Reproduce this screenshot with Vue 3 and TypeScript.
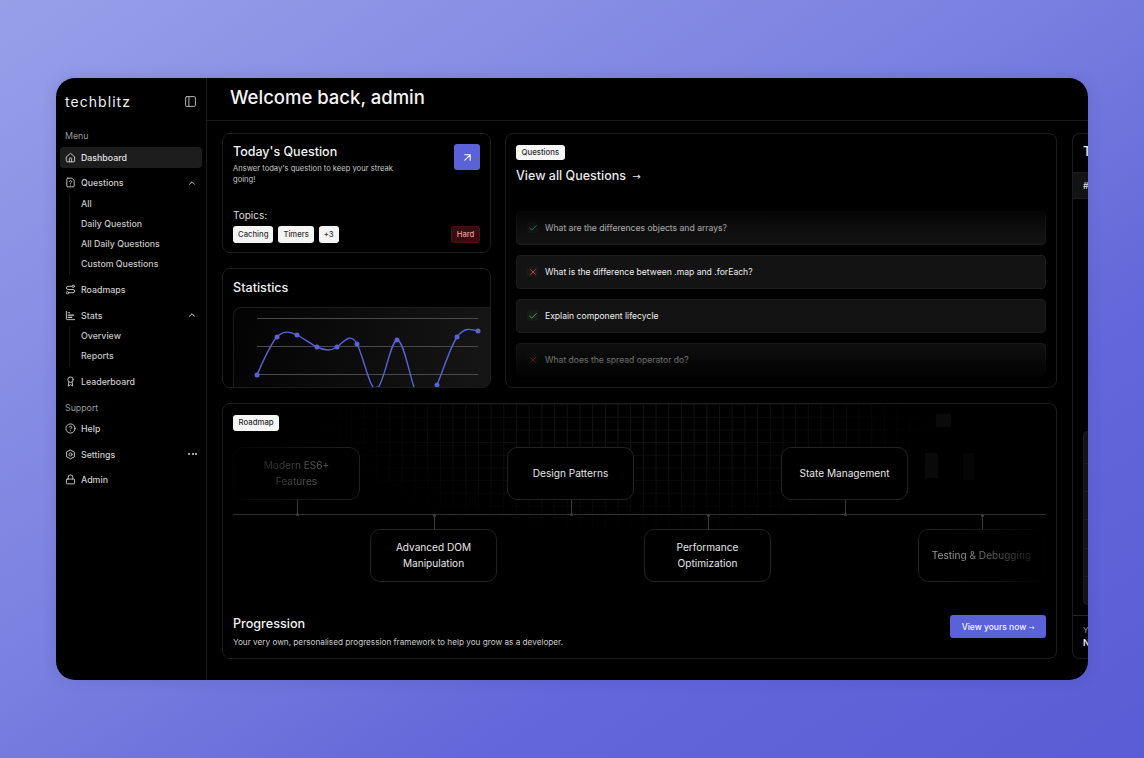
<script setup lang="ts">
const subQuestions = ['All', 'Daily Question', 'All Daily Questions', 'Custom Questions']
const subStats = ['Overview', 'Reports']
const topics = ['Caching', 'Timers', '+3']

const questions = [
  { text: 'What are the differences objects and arrays?', ok: true },
  { text: 'What is the difference between .map and .forEach?', ok: false },
  { text: 'Explain component lifecycle', ok: true },
  { text: 'What does the spread operator do?', ok: false },
]

const pts: [number, number][] = [
  [23, 67], [43, 29], [63, 27], [83, 39], [103, 39], [123, 36],
  [143, 81], [163, 32], [183, 88], [203, 77], [223, 29], [244, 23],
]

function spline(p: [number, number][]): string {
  const n = p.length - 1
  const a: number[] = []
  const b: number[] = []
  const c: number[] = []
  const r: number[] = []
  const key = (i: number) => p[i][1]
  a[0] = 0; b[0] = 2; c[0] = 1; r[0] = key(0) + 2 * key(1)
  for (let i = 1; i < n - 1; i++) {
    a[i] = 1; b[i] = 4; c[i] = 1
    r[i] = 4 * key(i) + 2 * key(i + 1)
  }
  a[n - 1] = 2; b[n - 1] = 7; c[n - 1] = 0
  r[n - 1] = 8 * key(n - 1) + key(n)
  for (let i = 1; i < n; i++) {
    const m = a[i] / b[i - 1]
    b[i] -= m * c[i - 1]
    r[i] -= m * r[i - 1]
  }
  const c1: number[] = []
  const c2: number[] = []
  c1[n - 1] = r[n - 1] / b[n - 1]
  for (let i = n - 2; i >= 0; i--) c1[i] = (r[i] - c[i] * c1[i + 1]) / b[i]
  for (let i = 0; i < n - 1; i++) c2[i] = 2 * key(i + 1) - c1[i + 1]
  c2[n - 1] = (key(n) + c1[n - 1]) / 2
  let d = `M${p[0][0]} ${p[0][1]}`
  for (let i = 0; i < n; i++) {
    const dx = (p[i + 1][0] - p[i][0]) / 3
    d += ` C${p[i][0] + dx} ${c1[i].toFixed(2)} ${p[i + 1][0] - dx} ${c2[i].toFixed(2)} ${p[i + 1][0]} ${p[i + 1][1]}`
  }
  return d
}
const linePath = spline(pts)

const topNodes = [
  { lines: ['Modern ES6+', 'Features'], dim: 'fade-left' },
  { lines: ['Design Patterns'], dim: '' },
  { lines: ['State Management'], dim: '' },
]
const bottomNodes = [
  { lines: ['Advanced DOM', 'Manipulation'], dim: '' },
  { lines: ['Performance', 'Optimization'], dim: '' },
  { lines: ['Testing & Debugging'], dim: 'fade-right' },
]
const stripes = [1, 2, 3, 4, 5, 6]
</script>

<template>
  <div class="page">
    <div class="window">
      <aside class="sidebar">
        <div class="brand">
          <span class="logo">techblitz</span>
          <svg class="ic panel" viewBox="0 0 24 24"><rect x="3" y="3" width="18" height="18" rx="2" /><path d="M9 3v18" /></svg>
        </div>
        <div class="group-label">Menu</div>
        <a class="item active">
          <svg class="ic" viewBox="0 0 24 24"><path d="M3 10.500 12 3l9 7.500V20a1.500 1.500 0 0 1-1.500 1.500h-15A1.500 1.500 0 0 1 3 20z" /><path d="M9.500 21.500V14a1 1 0 0 1 1-1h3a1 1 0 0 1 1 1v7.500" /></svg>
          <span>Dashboard</span>
        </a>
        <a class="item">
          <svg class="ic" viewBox="0 0 24 24"><path d="M6 2.500h9l5 5V20a1.500 1.500 0 0 1-1.500 1.500h-13A1.500 1.500 0 0 1 4 20V4.500a2 2 0 0 1 2-2z" /><path d="M9.500 10a2.500 2.500 0 1 1 3.800 2.100c-.8.500-1.300 1-1.300 1.900" /><path d="M12 17.500v.01" /></svg>
          <span>Questions</span>
          <svg class="ic chev" viewBox="0 0 24 24"><path d="m6 15 6-6 6 6" /></svg>
        </a>
        <div class="sub">
          <a v-for="s in subQuestions" :key="s">{{ s }}</a>
        </div>
        <a class="item">
          <svg class="ic" viewBox="0 0 24 24"><circle cx="5.500" cy="19" r="2.500" /><path d="M8 19h9.500a3.500 3.500 0 0 0 0-7h-11a3.500 3.500 0 0 1 0-7H15" /><circle cx="18" cy="5" r="2.500" /></svg>
          <span>Roadmaps</span>
        </a>
        <a class="item">
          <svg class="ic" viewBox="0 0 24 24"><path d="M3 3v16a2 2 0 0 0 2 2h16" /><path d="M7 16h8M7 11h12M7 6h3" stroke-width="2.600" /></svg>
          <span>Stats</span>
          <svg class="ic chev" viewBox="0 0 24 24"><path d="m6 15 6-6 6 6" /></svg>
        </a>
        <div class="sub">
          <a v-for="s in subStats" :key="s">{{ s }}</a>
        </div>
        <a class="item">
          <svg class="ic" viewBox="0 0 24 24"><circle cx="12" cy="8" r="6" /><path d="m15.500 13.500 1.500 8.500-5-3-5 3 1.500-8.500" /></svg>
          <span>Leaderboard</span>
        </a>
        <div class="group-label second">Support</div>
        <a class="item">
          <svg class="ic" viewBox="0 0 24 24"><circle cx="12" cy="12" r="10" /><path d="M9.100 9a3 3 0 0 1 5.800 1c0 2-3 3-3 3" /><path d="M12 17h.01" /></svg>
          <span>Help</span>
        </a>
        <a class="item">
          <svg class="ic" viewBox="0 0 24 24"><path d="M12 2.500 20.500 7v10L12 21.500 3.500 17V7z" /><circle cx="12" cy="12" r="3.500" /></svg>
          <span>Settings</span>
          <span class="dots"><i></i><i></i><i></i></span>
        </a>
        <a class="item">
          <svg class="ic" viewBox="0 0 24 24"><rect x="3" y="11" width="18" height="10.500" rx="2" /><path d="M7 11V7a5 5 0 0 1 10 0v4" /></svg>
          <span>Admin</span>
        </a>
      </aside>

      <main class="main">
        <header class="topbar">Welcome back, admin</header>
        <div class="content">
          <section class="card today">
            <div class="today-head">
              <div>
                <h2>Today's Question</h2>
                <p>Answer today's question to keep your streak going!</p>
              </div>
              <button class="go" type="button">
                <svg viewBox="0 0 24 24"><path d="M7 7h10v10M7 17 17 7" /></svg>
              </button>
            </div>
            <div class="today-foot">
              <div>
                <div class="topics-label">Topics:</div>
                <div class="tags"><span v-for="t in topics" :key="t" class="tag">{{ t }}</span></div>
              </div>
              <span class="hard">Hard</span>
            </div>
          </section>

          <section class="card questions">
            <span class="chip">Questions</span>
            <h2 class="view-all">View all Questions <span class="arrow">→</span></h2>
            <div class="q-list">
              <div v-for="q in questions" :key="q.text" class="q-row">
                <span class="q-mark" :class="q.ok ? 'ok' : 'bad'">
                  <svg viewBox="0 0 24 24"><path v-if="q.ok" d="M20 6 9 17l-5-5" /><path v-else d="M18 6 6 18M6 6l12 12" /></svg>
                </span>
                <span class="q-text">{{ q.text }}</span>
              </div>
              <div class="q-fade"></div>
            </div>
          </section>

          <section class="card board">
            <h2>Top Users</h2>
            <div class="board-head">#</div>
            <div class="board-list">
              <div v-for="s in stripes" :key="s" class="stripe"></div>
            </div>
            <div class="board-foot">
              <div class="foot-small">Your rank</div>
              <div class="foot-big">N/A</div>
            </div>
          </section>

          <section class="card stats">
            <h2>Statistics</h2>
            <div class="chart">
              <svg width="257" height="81" viewBox="0 0 257 81" class="chart-svg">
                <path class="grid" d="M23 10.500h221M23 38.500h221M23 66.500h221" />
                <path class="line" :d="linePath" />
                <circle v-for="p in pts" :key="p[0]" :cx="p[0]" :cy="p[1]" r="2.500" class="dot" />
              </svg>
            </div>
          </section>

          <section class="card roadmap">
            <div class="mesh"></div>
            <i class="cell c1"></i>
            <i class="cell c2"></i>
            <i class="cell c3"></i>
            <span class="chip">Roadmap</span>
            <div class="tree">
              <div class="tree-row top">
                <div v-for="n in topNodes" :key="n.lines[0]" class="node">
                  <div class="node-box" :class="n.dim">
                    <span v-for="l in n.lines" :key="l">{{ l }}</span>
                  </div>
                </div>
              </div>
              <div class="rule"></div>
              <div class="tree-row bottom">
                <div v-for="n in bottomNodes" :key="n.lines[0]" class="node">
                  <div class="node-box" :class="n.dim">
                    <span v-for="l in n.lines" :key="l">{{ l }}</span>
                  </div>
                </div>
              </div>
            </div>
            <div class="road-foot">
              <div>
                <h2>Progression</h2>
                <p>Your very own, personalised progression framework to help you grow as a developer.</p>
              </div>
              <button class="cta" type="button">View yours now <span>→</span></button>
            </div>
          </section>
        </div>
      </main>
    </div>
  </div>
</template>

<style>
html, body { margin: 0; padding: 0; }
</style>

<style scoped>
* { box-sizing: border-box; }
.page {
  width: 1144px;
  height: 758px;
  padding: 78px 56px;
  overflow: hidden;
  background: linear-gradient(to bottom right, #989fe9 0%, #7a80e0 45%, #6367d9 70%, #5a5cd5 100%);
  font-family: Inter, "Noto Sans", sans-serif;
  color: #fff;
}
.window {
  width: 1032px;
  height: 602px;
  display: flex;
  background: #000;
  border-radius: 19px;
  overflow: hidden;
  box-shadow: 0 0 14px rgba(50, 50, 130, 0.18);
}
.sidebar {
  flex: 0 0 151px;
  padding: 0 4px;
  border-right: 1px solid #1a1a1a;
  display: flex;
  flex-direction: column;
}
.brand {
  height: 46px;
  padding: 0 5px;
  display: flex;
  align-items: center;
  justify-content: space-between;
}
.logo { font-size: 14px; letter-spacing: 1.050px; font-weight: 400; color: #f2f2f2; }
.ic {
  width: 11px;
  height: 11px;
  fill: none;
  stroke: #cfcfcf;
  stroke-width: 2;
  stroke-linecap: round;
  stroke-linejoin: round;
  flex: none;
}
.ic.panel { width: 13px; height: 13px; stroke: #b9b9b9; stroke-width: 1.800; }
.group-label {
  font-size: 8.800px;
  color: #9a9a9a;
  height: 12px;
  line-height: 12px;
  margin: 6px 0 0 5px;
}
.group-label.second { margin-top: 9.500px; }
.item {
  height: 21px;
  margin-top: 4.500px;
  padding: 0 5px;
  display: flex;
  align-items: center;
  gap: 5px;
  font-size: 8.800px;
  font-weight: 500;
  color: #cdcdcd;
  border-radius: 4px;
}
.item.active { background: #1d1d1d; color: #e2e2e2; }
.item .chev { margin-left: auto; width: 10px; height: 10px; margin-right: 0; stroke-width: 2.400; }
.dots { margin-left: auto; display: flex; gap: 1.500px; }
.dots i { width: 2px; height: 2px; border-radius: 50%; background: #d8d8d8; }
.sub {
  margin: 0.500px 0 0 9px;
  padding-left: 11px;
  border-left: 1px solid #161616;
  display: flex;
  flex-direction: column;
}
.sub a {
  height: 20.300px;
  line-height: 20.300px;
  font-size: 8.800px;
  font-weight: 500;
  color: #c4c4c4;
}
.main { flex: 1; min-width: 0; display: flex; flex-direction: column; }
.topbar {
  height: 43px;
  padding: 0 0 4px 23px;
  display: flex;
  align-items: center;
  font-size: 18.500px;
  font-weight: 500;
  border-bottom: 1px solid #1a1a1a;
  color: #f4f4f4;
}
.content {
  flex: 1;
  padding: 12px 0 0 15px;
  display: grid;
  grid-template-columns: 269px 552px 120px;
  grid-template-rows: 120px 120px 256px;
  column-gap: 14px;
  row-gap: 15px;
  overflow: hidden;
}
.card {
  border: 1px solid #1c1c1c;
  border-radius: 8px;
  background: #000;
  overflow: hidden;
  position: relative;
}
h2 { margin: 0; font-weight: 500; }
.today { grid-column: 1; grid-row: 1; padding: 9px 10px; display: flex; flex-direction: column; justify-content: space-between; }
.today-head { display: flex; justify-content: space-between; padding-top: 1px; }
.today h2 { font-size: 12.500px; line-height: 16px; color: #f3f3f3; }
.today p { margin: 3px 0 0; width: 172px; font-size: 7.600px; line-height: 11px; color: #c6c6c6; }
.go {
  width: 26px;
  height: 26px;
  padding: 0;
  border: 0;
  border-radius: 3px;
  background: #5b61d6;
  display: flex;
  align-items: center;
  justify-content: center;
}
.go svg { width: 13px; height: 13px; fill: none; stroke: #fff; stroke-width: 2; stroke-linecap: round; stroke-linejoin: round; }
.today-foot { display: flex; justify-content: space-between; align-items: flex-end; }
.topics-label { font-size: 10px; line-height: 14px; color: #dcdcdc; margin-bottom: 4px; }
.tags { display: flex; gap: 5px; }
.tag {
  height: 17px;
  padding: 0 5px;
  background: #f5f5f5;
  color: #333;
  border-radius: 3px;
  font-size: 7.700px;
  font-weight: 500;
  line-height: 17px;
}
.hard {
  height: 17px;
  width: 29px;
  text-align: center;
  border-radius: 3px;
  background: #3b0b0f;
  border: 1px solid #4c1216;
  color: #e39a9a;
  font-size: 7.700px;
  font-weight: 500;
  line-height: 15px;
}
.stats { grid-column: 1; grid-row: 2; padding: 10px 0 0 10px; }
.stats h2 { font-size: 12.600px; line-height: 17px; color: #f0f0f0; }
.chart {
  margin-top: 11px;
  height: 90px;
  border: 1px solid #1c1c1c;
  border-right: 0;
  border-radius: 8px 0 0 0;
  background: linear-gradient(100deg, #030303, #161616);
  overflow: hidden;
}
.chart-svg { display: block; overflow: hidden; }
.grid { stroke: #4a4a4a; stroke-width: 1; fill: none; }
.line { stroke: #5b61d6; stroke-width: 1.400; fill: none; }
.dot { fill: #5b61d6; }
.questions { grid-column: 2; grid-row: 1 / span 2; padding: 10.500px 10px 10px; }
.chip {
  position: relative;
  display: inline-block;
  height: 15.500px;
  padding: 0 5.500px;
  background: #f7f7f7;
  color: #2c2c2c;
  border-radius: 3px;
  font-size: 7.800px;
  font-weight: 500;
  line-height: 15.500px;
  vertical-align: top;
}
.view-all { margin-top: 2px; font-size: 12.500px; line-height: 17px; color: #e8e8e8; font-weight: 500; }
.arrow { font-family: "DejaVu Sans", sans-serif; font-size: 10px; margin-left: 3px; }
.q-list {
  position: relative;
  margin-top: 26px;
  display: flex;
  flex-direction: column;
  gap: 10px;
}
.q-row {
  height: 34px;
  padding: 0 10px;
  display: flex;
  align-items: center;
  gap: 7px;
  background: #131313;
  border: 1px solid #1d1d1d;
  border-radius: 4px;
}
.q-mark {
  width: 11px;
  height: 11px;
  border-radius: 2px;
  display: flex;
  align-items: center;
  justify-content: center;
  background: #191919;
}
.q-mark svg { width: 10px; height: 10px; fill: none; stroke-width: 2.200; stroke-linecap: round; stroke-linejoin: round; }
.q-mark.ok svg { stroke: #22c55e; }
.q-mark.bad svg { stroke: #d0393f; }
.q-text { font-size: 8.600px; font-weight: 400; color: #ededed; }
.q-fade {
  position: absolute;
  inset: -6px -2px -10px;
  pointer-events: none;
  background: linear-gradient(to bottom, #000 0%, rgba(0,0,0,.7) 5%, rgba(0,0,0,.3) 12.600%, rgba(0,0,0,0) 22%, rgba(0,0,0,0) 72%, rgba(0,0,0,.55) 85%, #000 96%);
}
.board { grid-column: 3; grid-row: 1 / span 3; margin-left: 1px; display: flex; flex-direction: column; border-right: 0; border-radius: 8px 0 0 8px; }
.board h2 { padding: 9px 10px 0; height: 38px; font-size: 12.600px; line-height: 17px; color: #f3f3f3; }
.board-head { height: 27px; padding: 0 10px; line-height: 26px; font-size: 8.500px; font-weight: 600; color: #d6d6d6; background: #131313; border-top: 1px solid #1c1c1c; border-bottom: 1px solid #1c1c1c; }
.board-list { margin: 232px 0 0 10px; height: 174px; display: flex; flex-direction: column; border-radius: 4px 0 0 4px; overflow: hidden; background: #121212; border: 1px solid #1a1a1a; }
.stripe { flex: 1; border-bottom: 1px solid #1f1f1f; }
.stripe:first-child { flex: 0 0 32px; }
.stripe:last-child { border-bottom: 0; }
.board-foot { margin-top: 10px; flex: 1; padding: 9px 10px; border-top: 1px solid #262626; }
.foot-small { font-size: 8px; line-height: 11px; color: #a5a5a5; }
.foot-big { font-size: 9px; line-height: 13px; font-weight: 600; color: #eee; }
.roadmap { grid-column: 1 / span 2; grid-row: 3; padding: 11px 10px 10px; display: flex; flex-direction: column; align-items: flex-start; }
.mesh {
  position: absolute;
  left: 90px;
  right: 110px;
  top: 0;
  height: 125px;
  background-image:
    linear-gradient(to right, #161616 1px, transparent 1px),
    linear-gradient(to bottom, #101010 1px, transparent 1px);
  background-size: 12.700px 12.700px;
  -webkit-mask-image: radial-gradient(ellipse 50% 85% at 50% 20%, #000 0%, rgba(0,0,0,.6) 55%, transparent 100%);
  mask-image: radial-gradient(ellipse 50% 85% at 50% 20%, #000 0%, rgba(0,0,0,.6) 55%, transparent 100%);
}
.cell { position: absolute; display: block; }
.c1 { left: 713px; top: 10px; width: 15px; height: 13px; background: #0a0a0a; }
.c2 { left: 702px; top: 49px; width: 13px; height: 25px; background: #090909; }
.c3 { left: 740px; top: 49px; width: 11px; height: 27px; background: #050505; }
.tree { position: relative; width: 100%; margin-top: 16.500px; }
.tree-row { display: flex; }
.tree-row.top { gap: 147px; }
.tree-row.bottom { padding-left: 137px; gap: 147px; }
.node { position: relative; flex: none; width: 127px; height: 53px; }
.node-box {
  width: 100%;
  height: 100%;
  border: 1px solid #222;
  border-radius: 10px;
  background: #000;
  display: flex;
  flex-direction: column;
  align-items: center;
  justify-content: center;
  font-size: 10.100px;
  line-height: 15.700px;
  color: #e6e6e6;
}
.tree-row.top .node::after,
.tree-row.bottom .node::before {
  content: "";
  position: absolute;
  left: 50%;
  width: 1px;
  height: 14px;
  background: #3a3a3a;
}
.tree-row.top .node::after { top: 100%; }
.tree-row.bottom .node::before { bottom: 100%; }
.tree-row.top .node::before,
.tree-row.bottom .node::after {
  content: "";
  position: absolute;
  left: calc(50% - 1px);
  width: 3px;
  height: 3px;
  border-radius: 50%;
  background: #3f3f3f;
}
.tree-row.top .node::before { top: calc(100% + 12.500px); }
.tree-row.bottom .node::after { bottom: calc(100% + 12.500px); }
.rule { height: 1px; margin: 14px 0; background: #303030; }
.fade-left {
  color: #7a7a7a;
  -webkit-mask-image: linear-gradient(to right, rgba(0,0,0,.12) 0%, rgba(0,0,0,.55) 50%, #000 100%);
  mask-image: linear-gradient(to right, rgba(0,0,0,.12) 0%, rgba(0,0,0,.55) 50%, #000 100%);
}
.fade-right {
  color: #a2a2a2;
  -webkit-mask-image: linear-gradient(to right, #000 0%, rgba(0,0,0,.85) 35%, rgba(0,0,0,.08) 95%);
  mask-image: linear-gradient(to right, #000 0%, rgba(0,0,0,.85) 35%, rgba(0,0,0,.08) 95%);
}
.fade-right span { white-space: nowrap; }
.road-foot {
  margin-top: auto;
  width: 100%;
  display: flex;
  justify-content: space-between;
  align-items: flex-end;
}
.road-foot h2 { font-size: 12.600px; line-height: 17px; color: #f2f2f2; }
.road-foot p { margin: 5px 0 0; font-size: 8.200px; line-height: 11px; color: #cbcbcb; }
.cta {
  width: 96px;
  height: 23px;
  padding: 0;
  margin-bottom: 10px;
  border: 0;
  border-radius: 3px;
  background: #5b61d6;
  color: #f4f4f4;
  font-family: inherit;
  font-size: 8.500px;
  font-weight: 500;
}
.cta span { font-family: "DejaVu Sans", sans-serif; font-size: 7px; }
</style>
